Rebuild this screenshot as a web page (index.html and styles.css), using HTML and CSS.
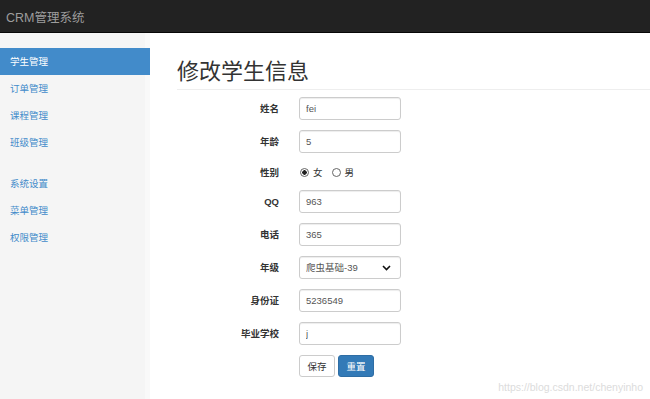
FILE: index.html
```html
<!DOCTYPE html>
<html lang="zh-CN">
<head>
    <meta charset="UTF-8">
    <meta name="viewport" content="width=device-width, initial-scale=1.0">
    <title>CRM管理系统 - 修改学生信息</title>
    <link rel="stylesheet" href="styles.css">
</head>
<body>

<!-- 顶部导航 -->
<div class="navbar">
    <span class="brand">CRM管理系统</span>
</div>

<div class="layout">
    <!-- 左侧菜单 -->
    <div class="sidebar">
        <ul class="nav-sidebar">
            <li class="active"><a href="#">学生管理</a></li>
            <li><a href="#">订单管理</a></li>
            <li><a href="#">课程管理</a></li>
            <li><a href="#">班级管理</a></li>
        </ul>
        <ul class="nav-sidebar">
            <li><a href="#">系统设置</a></li>
            <li><a href="#">菜单管理</a></li>
            <li><a href="#">权限管理</a></li>
        </ul>
    </div>

    <!-- 主体内容 -->
    <div class="main">
        <h1 class="page-header">修改学生信息</h1>
        <form class="form-horizontal">
            <label class="control-label">姓名</label>
            <input class="form-control" type="text" value="fei">

            <label class="control-label">年龄</label>
            <input class="form-control" type="text" value="5">

            <label class="control-label radio-label">性别</label>
            <div class="radio-group">
                <label class="radio"><input type="radio" name="sex" checked> 女</label>
                <label class="radio"><input type="radio" name="sex"> 男</label>
            </div>

            <label class="control-label">QQ</label>
            <input class="form-control" type="text" value="963">

            <label class="control-label">电话</label>
            <input class="form-control" type="text" value="365">

            <label class="control-label">年级</label>
            <div class="select-wrap">
                <select class="form-control">
                    <option>爬虫基础-39</option>
                </select>
                <svg class="chevron" width="9" height="6" viewBox="0 0 9 6"><path d="M1 1 L4.5 4.5 L8 1" fill="none" stroke="#111" stroke-width="1.6"/></svg>
            </div>

            <label class="control-label">身份证</label>
            <input class="form-control" type="text" value="5236549">

            <label class="control-label">毕业学校</label>
            <input class="form-control" type="text" value="j">

            <span></span>
            <div class="buttons">
                <button type="button" class="btn">保存</button>
                <button type="button" class="btn btn-primary">重置</button>
            </div>
        </form>
    </div>
</div>

<div class="watermark">https://blog.csdn.net/chenyinho</div>

</body>
</html>
```

FILE: styles.css
```css
body {
    font-family: "Liberation Sans", "Noto Sans CJK SC", sans-serif;
    font-size: 9.5px;
    color: #333;
    margin: 0;
    padding: 0;
    background-color: #fff;
    overflow: hidden;
}
.navbar {
    height: 33px;
    background-color: #222; /* barra oscura */
    border-bottom: 1px solid #080808;
    box-sizing: border-box;
    display: flex;
    align-items: center;
    padding-left: 6px;
}
.brand {
    color: #9d9d9d;
    font-size: 12.5px;
}
.layout {
    display: flex;
    height: calc(100vh - 33px);
}
.sidebar {
    width: 145px;
    background-color: #f5f5f5;
    border-right: 5px solid #f9f9f9;
    padding-top: 15px;
}
.nav-sidebar {
    list-style: none;
    margin: 0 -5px 14px 0;
    padding: 0;
}
.nav-sidebar li a {
    display: block;
    height: 27px;
    line-height: 27px;
    padding-left: 10px;
    color: #428bca;
    text-decoration: none;
}
.nav-sidebar li.active a {
    background-color: #428bca;
    color: #fff;
}
.main {
    flex: 1;
    padding: 27px 0 0 27px;
}
.page-header {
    margin: 0 0 7px;
    padding-bottom: 5px;
    font-size: 22px;
    font-weight: normal;
    line-height: 24px;
    color: #333;
    border-bottom: 1px solid #eee;
}
.form-horizontal {
    display: grid;
    grid-template-columns: 102px 102px;
    column-gap: 20px;
    row-gap: 10px;
    align-items: center;
}
.control-label {
    text-align: right;
    font-weight: bold;
    line-height: 14px;
}
.form-control {
    width: 102px;
    height: 23px;
    box-sizing: border-box;
    padding: 0 6px;
    border: 1px solid #ccc;
    border-radius: 3px;
    font-family: inherit;
    font-size: 9.5px;
    color: #555;
    background-color: #fff;
    box-shadow: inset 0 1px 1px rgba(0, 0, 0, 0.075);
}
.radio-group {
    display: flex;
    gap: 8px;
    height: 17px;
    box-sizing: border-box;
    align-items: center;
    padding-top: 2px;
}
.radio-label {
    padding-top: 2px;
}
.radio {
    display: flex;
    align-items: center;
    gap: 4px;
    color: #333;
    line-height: 14px;
}
.radio input {
    appearance: none;
    width: 9px;
    height: 9px;
    margin: 0 0 0 1px;
    border: 1px solid #666;
    border-radius: 50%;
    box-sizing: border-box;
    background-color: #fff;
}
.radio input:checked {
    background: radial-gradient(circle, #222 0 2px, #fff 2.5px);
}
.select-wrap {
    position: relative;
    width: 102px;
    height: 23px;
}
.select-wrap select {
    appearance: none;
}
.chevron {
    position: absolute;
    right: 10px;
    top: 9px;
}
.buttons {
    display: flex;
    gap: 3px;
}
.btn {
    width: 36px;
    height: 22px;
    padding: 0;
    border: 1px solid #ccc;
    border-radius: 3px;
    background-color: #fff;
    color: #333;
    font-family: inherit;
    font-size: 9.5px;
    cursor: pointer;
}
.btn-primary {
    background-color: #337ab7; /* botón azul */
    border-color: #2e6da4;
    color: #fff;
}
.watermark {
    position: absolute;
    right: 7px;
    bottom: 6px;
    color: #dcdcdc;
    font-size: 10.5px;
}
```
